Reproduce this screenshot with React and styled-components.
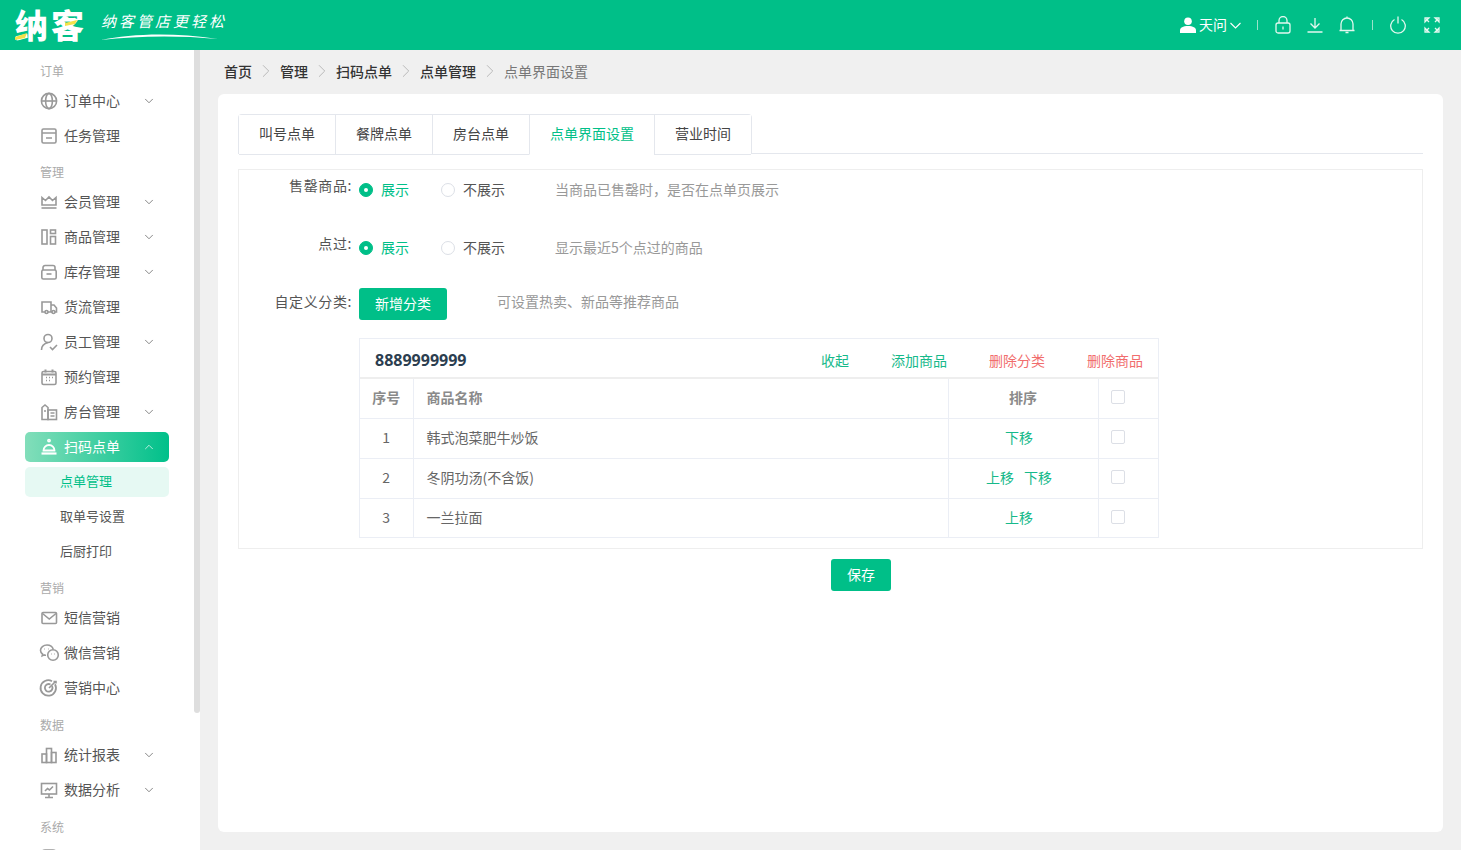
import React from "react";
import styled, { createGlobalStyle } from "styled-components";
import { ChevronDown, ChevronUp, ChevronRight } from "lucide-react";

const GlobalStyle = createGlobalStyle`
  html, body {
    margin: 0;
    padding: 0;
    height: 100%;
    background: #f0f0f0;
    font-family: "Noto Sans CJK SC", "Liberation Sans", sans-serif;
    font-size: 14px;
    overflow: hidden;
  }
  * { box-sizing: border-box; }
`;

const icons = {
  globe: (
    <>
      <circle cx="9" cy="9" r="7.6" />
      <ellipse cx="9" cy="9" rx="3.4" ry="7.6" />
      <path d="M1.4 9h15.2" />
    </>
  ),
  task: (
    <>
      <rect x="2" y="2" width="14" height="14" rx="1.5" />
      <path d="M2 6h14M6 11h6" />
    </>
  ),
  crown: (
    <>
      <path d="M2 4.500l3.500 3L9 4l3.500 3.500L16 4.500v7.500H2z" />
      <path d="M1.500 15h15" />
    </>
  ),
  goods: (
    <>
      <rect x="2" y="2" width="5" height="14" />
      <rect x="10.500" y="2" width="5" height="3.500" />
      <rect x="10.500" y="8.500" width="5" height="7.500" />
    </>
  ),
  box: (
    <>
      <path d="M3 7V4.500A2 2 0 0 1 5 2.500h8a2 2 0 0 1 2 2V7" />
      <rect x="1.800" y="7" width="14.400" height="9" rx="1.500" />
      <path d="M6.500 11h5" />
    </>
  ),
  truck: (
    <>
      <path d="M5 14H2V4h9v10H8" />
      <path d="M11 7h3l2.500 3v4H15M11 14h1" />
      <circle cx="6.500" cy="14" r="1.500" />
      <circle cx="13.500" cy="14" r="1.500" />
    </>
  ),
  staff: (
    <>
      <circle cx="8" cy="5.500" r="4" />
      <path d="M1.500 17c0-3.500 2.500-6.500 6.500-7.500M10 14l2.500 2.500L17 12" />
    </>
  ),
  calendar: (
    <>
      <rect x="2" y="3.500" width="14" height="13" rx="1.500" />
      <path d="M5.500 1.500v3M12.500 1.500v3M2 6.500h14" strokeWidth="2" />
      <path d="M6 9.500h1M9 9.500h1M12 9.500h1M6 12.500h1M9 12.500h1" />
    </>
  ),
  room: (
    <>
      <path d="M2 16.500V4.500L5 2l3 2.500v12z" />
      <rect x="8" y="7" width="8.500" height="9.500" />
      <path d="M10.500 10h4M10.500 13h4M4 8h2" />
    </>
  ),
  service: (
    <>
      <circle cx="9" cy="2.600" r="1.100" />
      <path d="M3.500 12.500a5.500 5.500 0 0 1 11 0z" strokeWidth="1.800" />
      <path d="M1.500 15.500h15" strokeWidth="2.200" />
    </>
  ),
  mail: (
    <>
      <rect x="2" y="3.500" width="14.500" height="11" rx="1" />
      <path d="M2.500 4.500L9.250 10l6.750-5.500" />
    </>
  ),
  wechat: (
    <>
      <path d="M7 1c-3.600 0-6.500 2.300-6.500 5.200 0 1.500.8 2.900 2.100 3.900l-.4 1.800 2.100-1c.5.200 1.100.3 1.700.3" />
      <path d="M7 1c3 0 5.500 1.700 6.200 4.100" />
      <circle cx="13" cy="11" r="5.300" />
      <path d="M11 10h.5M14.500 10h.5M4.500 5h.5M8.500 5h.5" />
    </>
  ),
  target: (
    <>
      <path d="M15 5.200A7.700 7.700 0 1 1 12 2.200" strokeWidth="1.800" />
      <path d="M12 7a3.800 3.800 0 1 1-1.500-1.500" strokeWidth="1.800" />
      <path d="M9 9l6.500-6.500M13.500 2.500h2.500v2" />
    </>
  ),
  bars: (
    <>
      <rect x="2" y="8" width="4.500" height="8.500" />
      <rect x="6.500" y="2.500" width="5" height="14" />
      <rect x="11.500" y="6.500" width="4.500" height="10" />
    </>
  ),
  monitor: (
    <>
      <rect x="1.500" y="2.500" width="15" height="10.500" />
      <path d="M9 13v3M5 16.500h8M5 10l2.500-2.500 2 1.500L13 5.500" />
    </>
  ),
  system: (
    <>
      <rect x="2" y="2" width="14" height="14" rx="3" />
      <path d="M6.500 2v14M11.500 2v14" />
    </>
  ),
};

const menu = [
  {
    title: "订单",
    items: [
      { icon: "globe", label: "订单中心", arrow: true },
      { icon: "task", label: "任务管理" },
    ],
  },
  {
    title: "管理",
    items: [
      { icon: "crown", label: "会员管理", arrow: true },
      { icon: "goods", label: "商品管理", arrow: true },
      { icon: "box", label: "库存管理", arrow: true },
      { icon: "truck", label: "货流管理" },
      { icon: "staff", label: "员工管理", arrow: true },
      { icon: "calendar", label: "预约管理" },
      { icon: "room", label: "房台管理", arrow: true },
      {
        icon: "service",
        label: "扫码点单",
        arrow: true,
        open: true,
        subs: ["点单管理", "取单号设置", "后厨打印"],
      },
    ],
  },
  {
    title: "营销",
    items: [
      { icon: "mail", label: "短信营销" },
      { icon: "wechat", label: "微信营销" },
      { icon: "target", label: "营销中心" },
    ],
  },
  {
    title: "数据",
    gap: 8,
    items: [
      { icon: "bars", label: "统计报表", arrow: true },
      { icon: "monitor", label: "数据分析", arrow: true },
    ],
  },
  {
    title: "系统",
    gap: 8,
    items: [{ icon: "system" }],
  },
];

const crumbs = ["首页", "管理", "扫码点单", "点单管理", "点单界面设置"];
const tabs = ["叫号点单", "餐牌点单", "房台点单", "点单界面设置", "营业时间"];
const goods = [
  { id: 1, name: "韩式泡菜肥牛炒饭", moves: ["下移"] },
  { id: 2, name: "冬阴功汤(不含饭)", moves: ["上移", "下移"] },
  { id: 3, name: "一兰拉面", moves: ["上移"] },
];

function MenuIcon({ name, $light }) {
  return (
    <IconSvg viewBox="0 0 18 18" $light={$light}>
      {icons[name]}
    </IconSvg>
  );
}

function RadioGroup() {
  return (
    <>
      <RadioItem $on>
        <RadioDot $on />
        <RadioText>展示</RadioText>
      </RadioItem>
      <RadioItem>
        <RadioDot />
        <RadioText>不展示</RadioText>
      </RadioItem>
    </>
  );
}

export default function App() {
  return (
    <Page>
      <GlobalStyle />
      <Header>
        <Logo>
          <LogoMark>
            纳客
            <LogoAccent viewBox="0 0 72 30">
              <path d="M0 27l12-4-2 5-10 2z" fill="#f3e24a" />
              <path d="M50 13l12-3-2 4-10 2z" fill="#f3e24a" />
            </LogoAccent>
          </LogoMark>
          <Slogan>
            <SloganText>纳客管店更轻松</SloganText>
            <svg width="118" height="8" viewBox="0 0 118 8">
              <path d="M0 7C30 1 70-1 117 6C75 2 35 3 0 7z" fill="#fff" />
            </svg>
          </Slogan>
        </Logo>
        <HeaderTools>
          <UserBox>
            <TopIcon viewBox="0 0 16 16" $fill>
              <circle cx="8" cy="4.200" r="3.800" />
              <path d="M0 16v-2.500C0 10.500 3 9 8 9s8 1.500 8 4.500V16z" />
            </TopIcon>
            <UserName>天问</UserName>
            <UserChevron viewBox="0 0 11 7">
              <path d="M.5 1l5 5 5-5" />
            </UserChevron>
          </UserBox>
          <ToolSep />
          <TopIcon viewBox="0 0 16 18">
            <rect x="1" y="7" width="14" height="10" rx="2" />
            <path d="M4 7V4.500a4 4 0 0 1 8 0V7M8 10.500v3" />
          </TopIcon>
          <TopIcon viewBox="0 0 16 18">
            <path d="M8 2v10M3.500 7.500L8 12l4.500-4.500M0.500 16h15" />
          </TopIcon>
          <TopIcon viewBox="0 0 16 18">
            <path d="M2 14.500V8a6 6 0 0 1 12 0v6.500M0.500 14.500h15M8 .5v1.500M6.500 16.500h3" />
          </TopIcon>
          <ToolSep />
          <TopIcon viewBox="0 0 16 18" $spaced>
            <path d="M4.500 3.500a7.300 7.300 0 1 0 7 0M8 .5v7" />
          </TopIcon>
          <TopIcon viewBox="0 0 16 16">
            <path d="M1 5V1h4L1 5zM15 5V1h-4l4 4zM1 11v4h4l-4-4zM15 11v4h-4l4-4z" />
            <path d="M2 2l3 3M14 2l-3 3M2 14l3-3M14 14l-3-3" />
          </TopIcon>
        </HeaderTools>
      </Header>
      <Body>
        <Sidebar>
          <ScrollThumb />
          {menu.map((group) => (
            <div key={group.title}>
              <GroupTitle $gap={group.gap}>{group.title}</GroupTitle>
              {group.items.map((item) => (
                <React.Fragment key={item.icon}>
                  <MenuRow>
                    <MenuPill $open={item.open}>
                      <MenuIcon name={item.icon} $light={item.open} />
                      {item.label && <MenuText>{item.label}</MenuText>}
                      {item.arrow && (
                        <MenuArrow>
                          {item.open ? (
                            <ChevronUp size={14} strokeWidth={1.4} />
                          ) : (
                            <ChevronDown size={14} strokeWidth={1.4} />
                          )}
                        </MenuArrow>
                      )}
                    </MenuPill>
                  </MenuRow>
                  {item.subs &&
                    item.subs.map((sub, i) => (
                      <MenuRow key={sub}>
                        <SubPill $on={i === 0}>{sub}</SubPill>
                      </MenuRow>
                    ))}
                </React.Fragment>
              ))}
            </div>
          ))}
        </Sidebar>
        <Main>
          <Breadcrumb>
            {crumbs.map((c, i) => (
              <React.Fragment key={c}>
                {i > 0 && (
                  <CrumbSep>
                    <ChevronRight size={22} strokeWidth={1} />
                  </CrumbSep>
                )}
                <Crumb $last={i === crumbs.length - 1}>{c}</Crumb>
              </React.Fragment>
            ))}
          </Breadcrumb>
          <Card>
            <TabBar>
              <TabGroup>
                {tabs.map((t) => (
                  <Tab key={t} $on={t === "点单界面设置"}>
                    {t}
                  </Tab>
                ))}
              </TabGroup>
            </TabBar>
            <FormBox>
              <FormRow>
                <FormLabel>售罄商品:</FormLabel>
                <RadioGroup />
                <Hint>当商品已售罄时，是否在点单页展示</Hint>
              </FormRow>
              <FormRow>
                <FormLabel>点过:</FormLabel>
                <RadioGroup />
                <Hint>显示最近5个点过的商品</Hint>
              </FormRow>
              <FormRow $short>
                <FormLabel $lift={6}>自定义分类:</FormLabel>
                <PrimaryButton $width={88}>新增分类</PrimaryButton>
                <Hint $lift={6}>可设置热卖、新品等推荐商品</Hint>
              </FormRow>
              <CategoryBox>
                <CategoryHead>
                  <CategoryName>8889999999</CategoryName>
                  <CategoryActions>
                    <ActionLink>收起</ActionLink>
                    <ActionLink>添加商品</ActionLink>
                    <ActionLink $danger>删除分类</ActionLink>
                    <ActionLink $danger>删除商品</ActionLink>
                  </CategoryActions>
                </CategoryHead>
                <GoodsTable>
                  <colgroup>
                    <col width="53" />
                    <col width="535" />
                    <col width="150" />
                    <col width="60" />
                  </colgroup>
                  <thead>
                    <tr>
                      <HeadCell $center>序号</HeadCell>
                      <HeadCell>商品名称</HeadCell>
                      <HeadCell $center>排序</HeadCell>
                      <HeadCell>
                        <CheckBox />
                      </HeadCell>
                    </tr>
                  </thead>
                  <tbody>
                    {goods.map((g) => (
                      <tr key={g.id}>
                        <BodyCell $center>{g.id}</BodyCell>
                        <BodyCell>{g.name}</BodyCell>
                        <BodyCell $center>
                          <MoveLinks>
                            {g.moves.map((m) => (
                              <ActionLink key={m}>{m}</ActionLink>
                            ))}
                          </MoveLinks>
                        </BodyCell>
                        <BodyCell>
                          <CheckBox />
                        </BodyCell>
                      </tr>
                    ))}
                  </tbody>
                </GoodsTable>
              </CategoryBox>
            </FormBox>
            <SaveRow>
              <PrimaryButton $width={60}>保存</PrimaryButton>
            </SaveRow>
          </Card>
        </Main>
      </Body>
    </Page>
  );
}

const Page = styled.div`
  width: 100%;
  height: 100vh;
  display: flex;
  flex-direction: column;
  overflow: hidden;
`;

const Header = styled.header`
  flex: 0 0 50px;
  height: 50px;
  background: #00bf88;
  display: flex;
  align-items: center;
  justify-content: space-between;
  padding: 0 21px 0 15px;
  color: #fff;
`;

const Logo = styled.div`
  display: flex;
  align-items: center;
  gap: 14px;
`;

const LogoMark = styled.div`
  position: relative;
  width: 72px;
  font-size: 33px;
  line-height: 40px;
  font-weight: 900;
  letter-spacing: 3px;
  padding-bottom: 3px;
  white-space: nowrap;
  color: #fff;
`;

const LogoAccent = styled.svg`
  position: absolute;
  left: 0;
  top: 6px;
  width: 72px;
  height: 30px;
`;

const Slogan = styled.div`
  display: flex;
  flex-direction: column;
  gap: 3px;
  margin-top: 3px;
`;

const SloganText = styled.div`
  font-size: 15px;
  line-height: 18px;
  letter-spacing: 3px;
  font-weight: 400;
  font-style: italic;
  white-space: nowrap;
`;

const HeaderTools = styled.div`
  display: flex;
  align-items: center;
  gap: 16px;
`;

const UserBox = styled.div`
  display: flex;
  align-items: center;
  gap: 3px;
  margin-right: -1px;
`;

const UserName = styled.span`
  font-size: 14px;
  padding-bottom: 3px;
`;

const UserChevron = styled.svg`
  width: 11px;
  height: 7px;
  fill: none;
  stroke: #fff;
  stroke-width: 1.1;
`;

const TopIcon = styled.svg`
  width: 16px;
  height: 18px;
  flex: none;
  margin-right: ${(p) => (p.$spaced ? "2px" : "0")};
  fill: ${(p) => (p.$fill ? "#fff" : "none")};
  stroke: ${(p) => (p.$fill ? "none" : "#e2f8ef")};
  stroke-width: 1.3;
`;

const ToolSep = styled.i`
  width: 1px;
  height: 10px;
  background: #9be3ca;
  margin: 0 1px;
`;

const Body = styled.div`
  flex: 1;
  display: flex;
  min-height: 0;
`;

const Sidebar = styled.aside`
  position: relative;
  flex: 0 0 200px;
  background: #fff;
  padding-top: 2px;
  overflow: hidden;
`;

const ScrollThumb = styled.div`
  position: absolute;
  top: 0;
  right: 0;
  width: 6px;
  height: 663px;
  background: #dedede;
  border-radius: 0 0 3px 3px;
`;

const GroupTitle = styled.div`
  height: 24px;
  line-height: 24px;
  margin-top: ${(p) => p.$gap ?? 7}px;
  padding-left: 40px;
  font-size: 12px;
  color: #aaa;
`;

const MenuRow = styled.div`
  height: 35px;
  padding: 0 31px 0 25px;
  display: flex;
  align-items: center;
`;

const MenuPill = styled.div`
  width: 144px;
  height: 30px;
  padding: 0 13px 0 15px;
  border-radius: 5px;
  display: flex;
  align-items: center;
  gap: 6px;
  color: ${(p) => (p.$open ? "#fff" : "#555")};
  background: ${(p) =>
    p.$open ? "linear-gradient(90deg, #82deba, #00c08a)" : "transparent"};
`;

const IconSvg = styled.svg`
  width: 18px;
  height: 18px;
  flex: none;
  overflow: visible;
  fill: none;
  stroke: ${(p) => (p.$light ? "#fff" : "#999")};
  stroke-width: 1.6;
`;

const MenuText = styled.span`
  font-size: 14px;
  white-space: nowrap;
  padding-bottom: 2px;
`;

const MenuArrow = styled.span`
  margin-left: auto;
  display: flex;
  opacity: 0.85;
`;

const SubPill = styled.div`
  width: 144px;
  height: 30px;
  line-height: 28px;
  padding-left: 35px;
  border-radius: 5px;
  font-size: 13px;
  color: ${(p) => (p.$on ? "#00bf88" : "#555")};
  background: ${(p) => (p.$on ? "#e6f9f3" : "transparent")};
`;

const Main = styled.main`
  flex: 1;
  min-width: 0;
  padding: 0 18px;
  display: flex;
  flex-direction: column;
`;

const Breadcrumb = styled.nav`
  flex: 0 0 44px;
  padding: 0 0 2px 6px;
  display: flex;
  align-items: center;
`;

const Crumb = styled.span`
  font-size: 14px;
  font-weight: ${(p) => (p.$last ? 400 : 500)};
  color: ${(p) => (p.$last ? "#777" : "#333")};
`;

const CrumbSep = styled.span`
  width: 28px;
  display: flex;
  justify-content: center;
  color: #b5b5b5;
`;

const Card = styled.section`
  height: 738px;
  background: #fff;
  border-radius: 6px;
  padding: 20px;
`;

const TabBar = styled.div`
  height: 40px;
  border-bottom: 1px solid #e4e7ed;
  display: flex;
`;

const TabGroup = styled.div`
  display: flex;
  height: 40px;
  border: 1px solid #e4e7ed;
  border-bottom: none;
  border-radius: 4px 4px 0 0;
`;

const Tab = styled.div`
  padding: 0 20px;
  height: 40px;
  line-height: 36px;
  font-size: 14px;
  color: ${(p) => (p.$on ? "#00bf88" : "#444")};
  background: #fff;
  border-left: 1px solid #e4e7ed;
  border-bottom: 1px solid ${(p) => (p.$on ? "#fff" : "#e4e7ed")};
  &:first-child {
    border-left: none;
  }
`;

const FormBox = styled.div`
  margin-top: 15px;
  height: 380px;
  border: 1px solid #eee;
`;

const FormRow = styled.div`
  height: ${(p) => (p.$short ? "36px" : "40px")};
  margin-bottom: ${(p) => (p.$short ? "16px" : "18px")};
  display: flex;
  align-items: center;
`;

const FormLabel = styled.label`
  width: 113px;
  margin-right: 7px;
  margin-bottom: ${(p) => p.$lift ?? 10}px;
  text-align: right;
  font-size: 14px;
  letter-spacing: 0.6px;
  color: #555;
  white-space: nowrap;
`;

const RadioItem = styled.span`
  width: 82px;
  display: flex;
  align-items: center;
  gap: 8px;
  font-size: 14px;
  color: ${(p) => (p.$on ? "#00bf88" : "#555")};
  &:nth-of-type(2) {
    width: 64px;
  }
`;

const RadioText = styled.span`
  margin-bottom: 2px;
`;

const RadioDot = styled.i`
  width: 14px;
  height: 14px;
  border-radius: 50%;
  border: 1px solid ${(p) => (p.$on ? "#00bf88" : "#dcdfe6")};
  background: ${(p) => (p.$on ? "#00bf88" : "#fff")};
  display: flex;
  align-items: center;
  justify-content: center;
  &::after {
    content: "";
    width: 4px;
    height: 4px;
    border-radius: 50%;
    background: #fff;
    display: ${(p) => (p.$on ? "block" : "none")};
  }
`;

const Hint = styled.span`
  margin-left: 50px;
  margin-bottom: ${(p) => p.$lift ?? 2}px;
  font-size: 14px;
  color: #999;
  white-space: nowrap;
`;

const PrimaryButton = styled.button`
  width: ${(p) => p.$width}px;
  height: 32px;
  border: none;
  border-radius: 3px;
  background: #00bf88;
  color: #fff;
  font-family: inherit;
  font-size: 14px;
  padding: 0 0 2px;
`;

const CategoryBox = styled.div`
  width: 800px;
  margin-left: 120px;
  border: 1px solid #ebeef5;
`;

const CategoryHead = styled.div`
  height: 40px;
  border-bottom: 2px solid #eee;
  padding: 4px 15px 0;
  display: flex;
  align-items: center;
  justify-content: space-between;
`;

const CategoryName = styled.strong`
  font-family: "Open Sans", "Liberation Sans", sans-serif;
  font-size: 16px;
  font-weight: 700;
  color: #2c3e50;
  margin-bottom: 1px;
`;

const CategoryActions = styled.div`
  display: flex;
  gap: 42px;
`;

const ActionLink = styled.span`
  font-size: 14px;
  color: ${(p) => (p.$danger ? "#f16d6d" : "#16b98a")};
`;

const GoodsTable = styled.table`
  width: 798px;
  table-layout: fixed;
  border-collapse: collapse;
`;

const HeadCell = styled.th`
  height: 39px;
  padding: 0 13px 2px;
  font-size: 14px;
  font-weight: 700;
  color: #8a8a8a;
  text-align: ${(p) => (p.$center ? "center" : "left")};
  border-bottom: 1px solid #ebeef5;
  border-right: 1px solid #ebeef5;
  &:first-child {
    padding: 0 0 2px;
  }
  &:last-child {
    padding: 0 12px;
    border-right: none;
  }
`;

const BodyCell = styled.td`
  height: 40px;
  padding: 0 13px 2px;
  font-size: 14px;
  color: #666;
  text-align: ${(p) => (p.$center ? "center" : "left")};
  border-bottom: 1px solid #ebeef5;
  border-right: 1px solid #ebeef5;
  &:last-child {
    padding: 0 12px;
    border-right: none;
  }
  tr:last-child > & {
    height: 39px;
    border-bottom: none;
  }
`;

const MoveLinks = styled.div`
  display: flex;
  justify-content: center;
  gap: 10px;
  margin-right: 8px;
`;

const CheckBox = styled.i`
  display: block;
  width: 14px;
  height: 14px;
  margin-bottom: 2px;
  border: 1px solid #dcdfe6;
  border-radius: 2px;
  background: #fff;
`;

const SaveRow = styled.div`
  margin-top: 10px;
  padding-left: 593px;
`;
